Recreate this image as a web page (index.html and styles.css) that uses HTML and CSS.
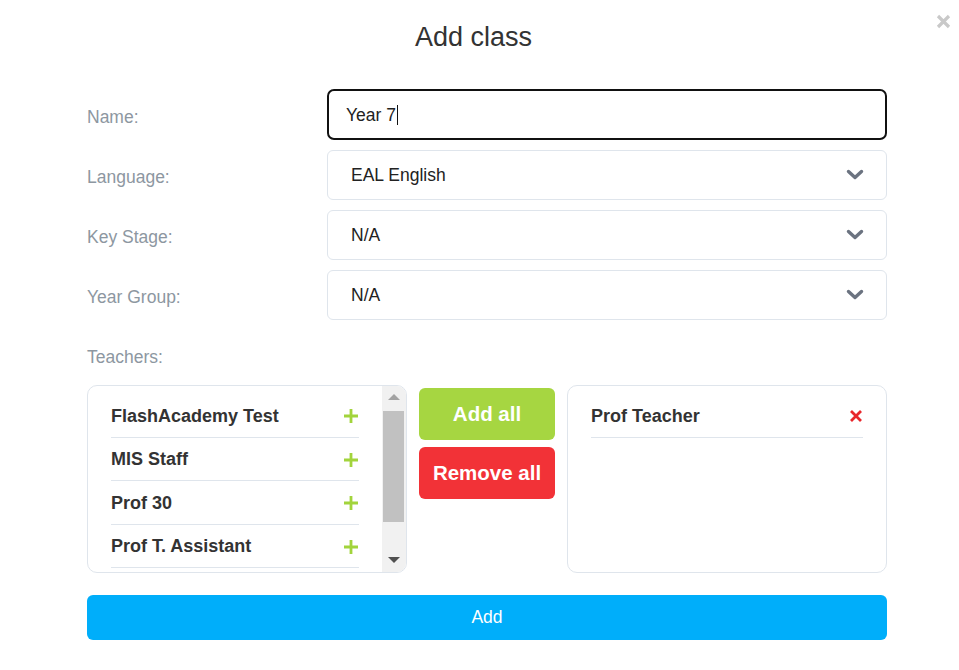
FILE: index.html
```html
<!DOCTYPE html>
<html>
<head>
<meta charset="utf-8">
<link rel="stylesheet" href="styles.css">
</head>
<body>
<div class="modal">
  <div class="close">
    <svg width="15" height="15" viewBox="0 0 15 15"><path d="M2 2 L13 13 M13 2 L2 13" stroke="#c9c9c9" stroke-width="3.2" stroke-linecap="butt"/></svg>
  </div>
  <h1 class="title">Add class</h1>
  <div class="form">
    <div class="row">
      <div class="label">Name:</div>
      <div class="field field-active"><span class="value">Year 7</span><span class="caret"></span></div>
    </div>
    <div class="row">
      <div class="label">Language:</div>
      <div class="field field-select"><span class="value">EAL English</span>
        <svg class="chev" width="18" height="12" viewBox="0 0 18 12"><path d="M2.5 2.5 L9 8.5 L15.5 2.5" fill="none" stroke="#6b7380" stroke-width="3.4" stroke-linecap="round" stroke-linejoin="round"/></svg>
      </div>
    </div>
    <div class="row">
      <div class="label">Key Stage:</div>
      <div class="field field-select"><span class="value">N/A</span>
        <svg class="chev" width="18" height="12" viewBox="0 0 18 12"><path d="M2.5 2.5 L9 8.5 L15.5 2.5" fill="none" stroke="#6b7380" stroke-width="3.4" stroke-linecap="round" stroke-linejoin="round"/></svg>
      </div>
    </div>
    <div class="row">
      <div class="label">Year Group:</div>
      <div class="field field-select"><span class="value">N/A</span>
        <svg class="chev" width="18" height="12" viewBox="0 0 18 12"><path d="M2.5 2.5 L9 8.5 L15.5 2.5" fill="none" stroke="#6b7380" stroke-width="3.4" stroke-linecap="round" stroke-linejoin="round"/></svg>
      </div>
    </div>
    <div class="label teachers-label">Teachers:</div>
    <div class="teachers">
      <div class="box box-left">
        <div class="list">
          <div class="item"><span>FlashAcademy Test</span><svg width="16" height="16" viewBox="0 0 16 16"><path d="M8 1 V15 M1 8 H15" stroke="#a2d43c" stroke-width="2.8"/></svg></div>
          <div class="item"><span>MIS Staff</span><svg width="16" height="16" viewBox="0 0 16 16"><path d="M8 1 V15 M1 8 H15" stroke="#a2d43c" stroke-width="2.8"/></svg></div>
          <div class="item"><span>Prof 30</span><svg width="16" height="16" viewBox="0 0 16 16"><path d="M8 1 V15 M1 8 H15" stroke="#a2d43c" stroke-width="2.8"/></svg></div>
          <div class="item"><span>Prof T. Assistant</span><svg width="16" height="16" viewBox="0 0 16 16"><path d="M8 1 V15 M1 8 H15" stroke="#a2d43c" stroke-width="2.8"/></svg></div>
        </div>
        <div class="scrollbar">
          <div class="arrow arrow-up"></div>
          <div class="track"><div class="thumb"></div></div>
          <div class="arrow arrow-down"></div>
        </div>
      </div>
      <div class="actions">
        <div class="btn btn-add-all">Add all</div>
        <div class="btn btn-remove-all">Remove all</div>
      </div>
      <div class="box box-right">
        <div class="list">
          <div class="item"><span>Prof Teacher</span><svg width="14" height="14" viewBox="0 0 14 14"><path d="M2 2 L12 12 M12 2 L2 12" stroke="#e8262b" stroke-width="2.8"/></svg></div>
        </div>
      </div>
    </div>
    <div class="submit">Add</div>
  </div>
</div>
</body>
</html>
```
FILE: styles.css
```css
html, body {
  margin: 0;
  padding: 0;
  background: #ffffff;
}
body {
  font-family: "Liberation Sans", Arial, sans-serif;
  color: #333333;
}
.modal {
  position: relative;
  width: 959px;
  height: 670px;
}
.close {
  position: absolute;
  top: 14px;
  right: 8px;
  width: 15px;
  height: 15px;
}
.close svg { display: block; }
.title {
  margin: 0;
  padding-top: 20px;
  padding-right: 12px;
  font-size: 27px;
  line-height: 34px;
  font-weight: normal;
  text-align: center;
  color: #333333;
}
.form {
  margin-top: 36px;
  padding-left: 87px;
  width: 800px;
}
.row {
  display: grid;
  grid-template-columns: 240px 560px;
  align-items: center;
  margin-bottom: 10px;
}
.label {
  font-size: 17.5px;
  color: #8d97a1;
  line-height: 20px;
  padding-top: 3px;
}
.field {
  box-sizing: border-box;
  height: 50px;
  border: 1px solid #dfe5ec;
  border-radius: 6px;
  display: flex;
  align-items: center;
  padding-left: 23px;
  padding-right: 22px;
  font-size: 17.5px;
  color: #222222;
}
.field-active {
  border: 2px solid #111111;
  border-radius: 7px;
  padding-left: 17px;
  padding-top: 1px;
  height: 51px;
  margin-top: -1px;
}
.field-select {
  justify-content: space-between;
}
.caret {
  display: inline-block;
  width: 1.5px;
  height: 20px;
  background: #111;
  margin-left: 1px;
}
.chev { display: block; }
.teachers-label {
  margin-top: 24px;
}
.teachers {
  display: flex;
  margin-top: 18px;
  height: 188px;
}
.box {
  box-sizing: border-box;
  width: 320px;
  height: 188px;
  border: 1px solid #dfe5ec;
  border-radius: 10px;
  overflow: hidden;
  display: flex;
}
.list {
  flex: 1;
  padding: 8px 23px 0 23px;
  overflow: hidden;
}
.item {
  box-sizing: border-box;
  height: 43.5px;
  border-bottom: 1px solid #dfe5ec;
  display: flex;
  align-items: center;
  justify-content: space-between;
  font-weight: bold;
  font-size: 18px;
  color: #333333;
  padding-top: 2px;
  padding-right: 0;
}
.item svg { display: block; }
.scrollbar {
  width: 24px;
  background: #f1f1f1;
  display: flex;
  flex-direction: column;
  align-items: center;
}
.arrow {
  width: 0;
  height: 0;
  border-left: 6px solid transparent;
  border-right: 6px solid transparent;
}
.arrow-up {
  margin-top: 8px;
  border-bottom: 6px solid #a3a3a3;
}
.arrow-down {
  margin-bottom: 9px;
  border-top: 6px solid #505050;
}
.track {
  flex: 1;
  width: 100%;
  padding-top: 11px;
}
.thumb {
  width: 21px;
  margin-left: 1px;
  height: 111px;
  background: #c1c1c1;
}
.actions {
  width: 160px;
  box-sizing: border-box;
  padding: 3px 12px 0 12px;
  display: flex;
  flex-direction: column;
  gap: 7px;
}
.btn {
  height: 52px;
  border-radius: 6px;
  display: flex;
  align-items: center;
  justify-content: center;
  color: #ffffff;
  font-weight: bold;
  font-size: 20.5px;
}
.btn-add-all { background: #a6d641; }
.btn-remove-all { background: #f23237; }
.submit {
  margin-top: 22px;
  height: 45px;
  border-radius: 6px;
  background: #00aefa;
  color: #ffffff;
  display: flex;
  align-items: center;
  justify-content: center;
  font-size: 17.5px;
}
```
